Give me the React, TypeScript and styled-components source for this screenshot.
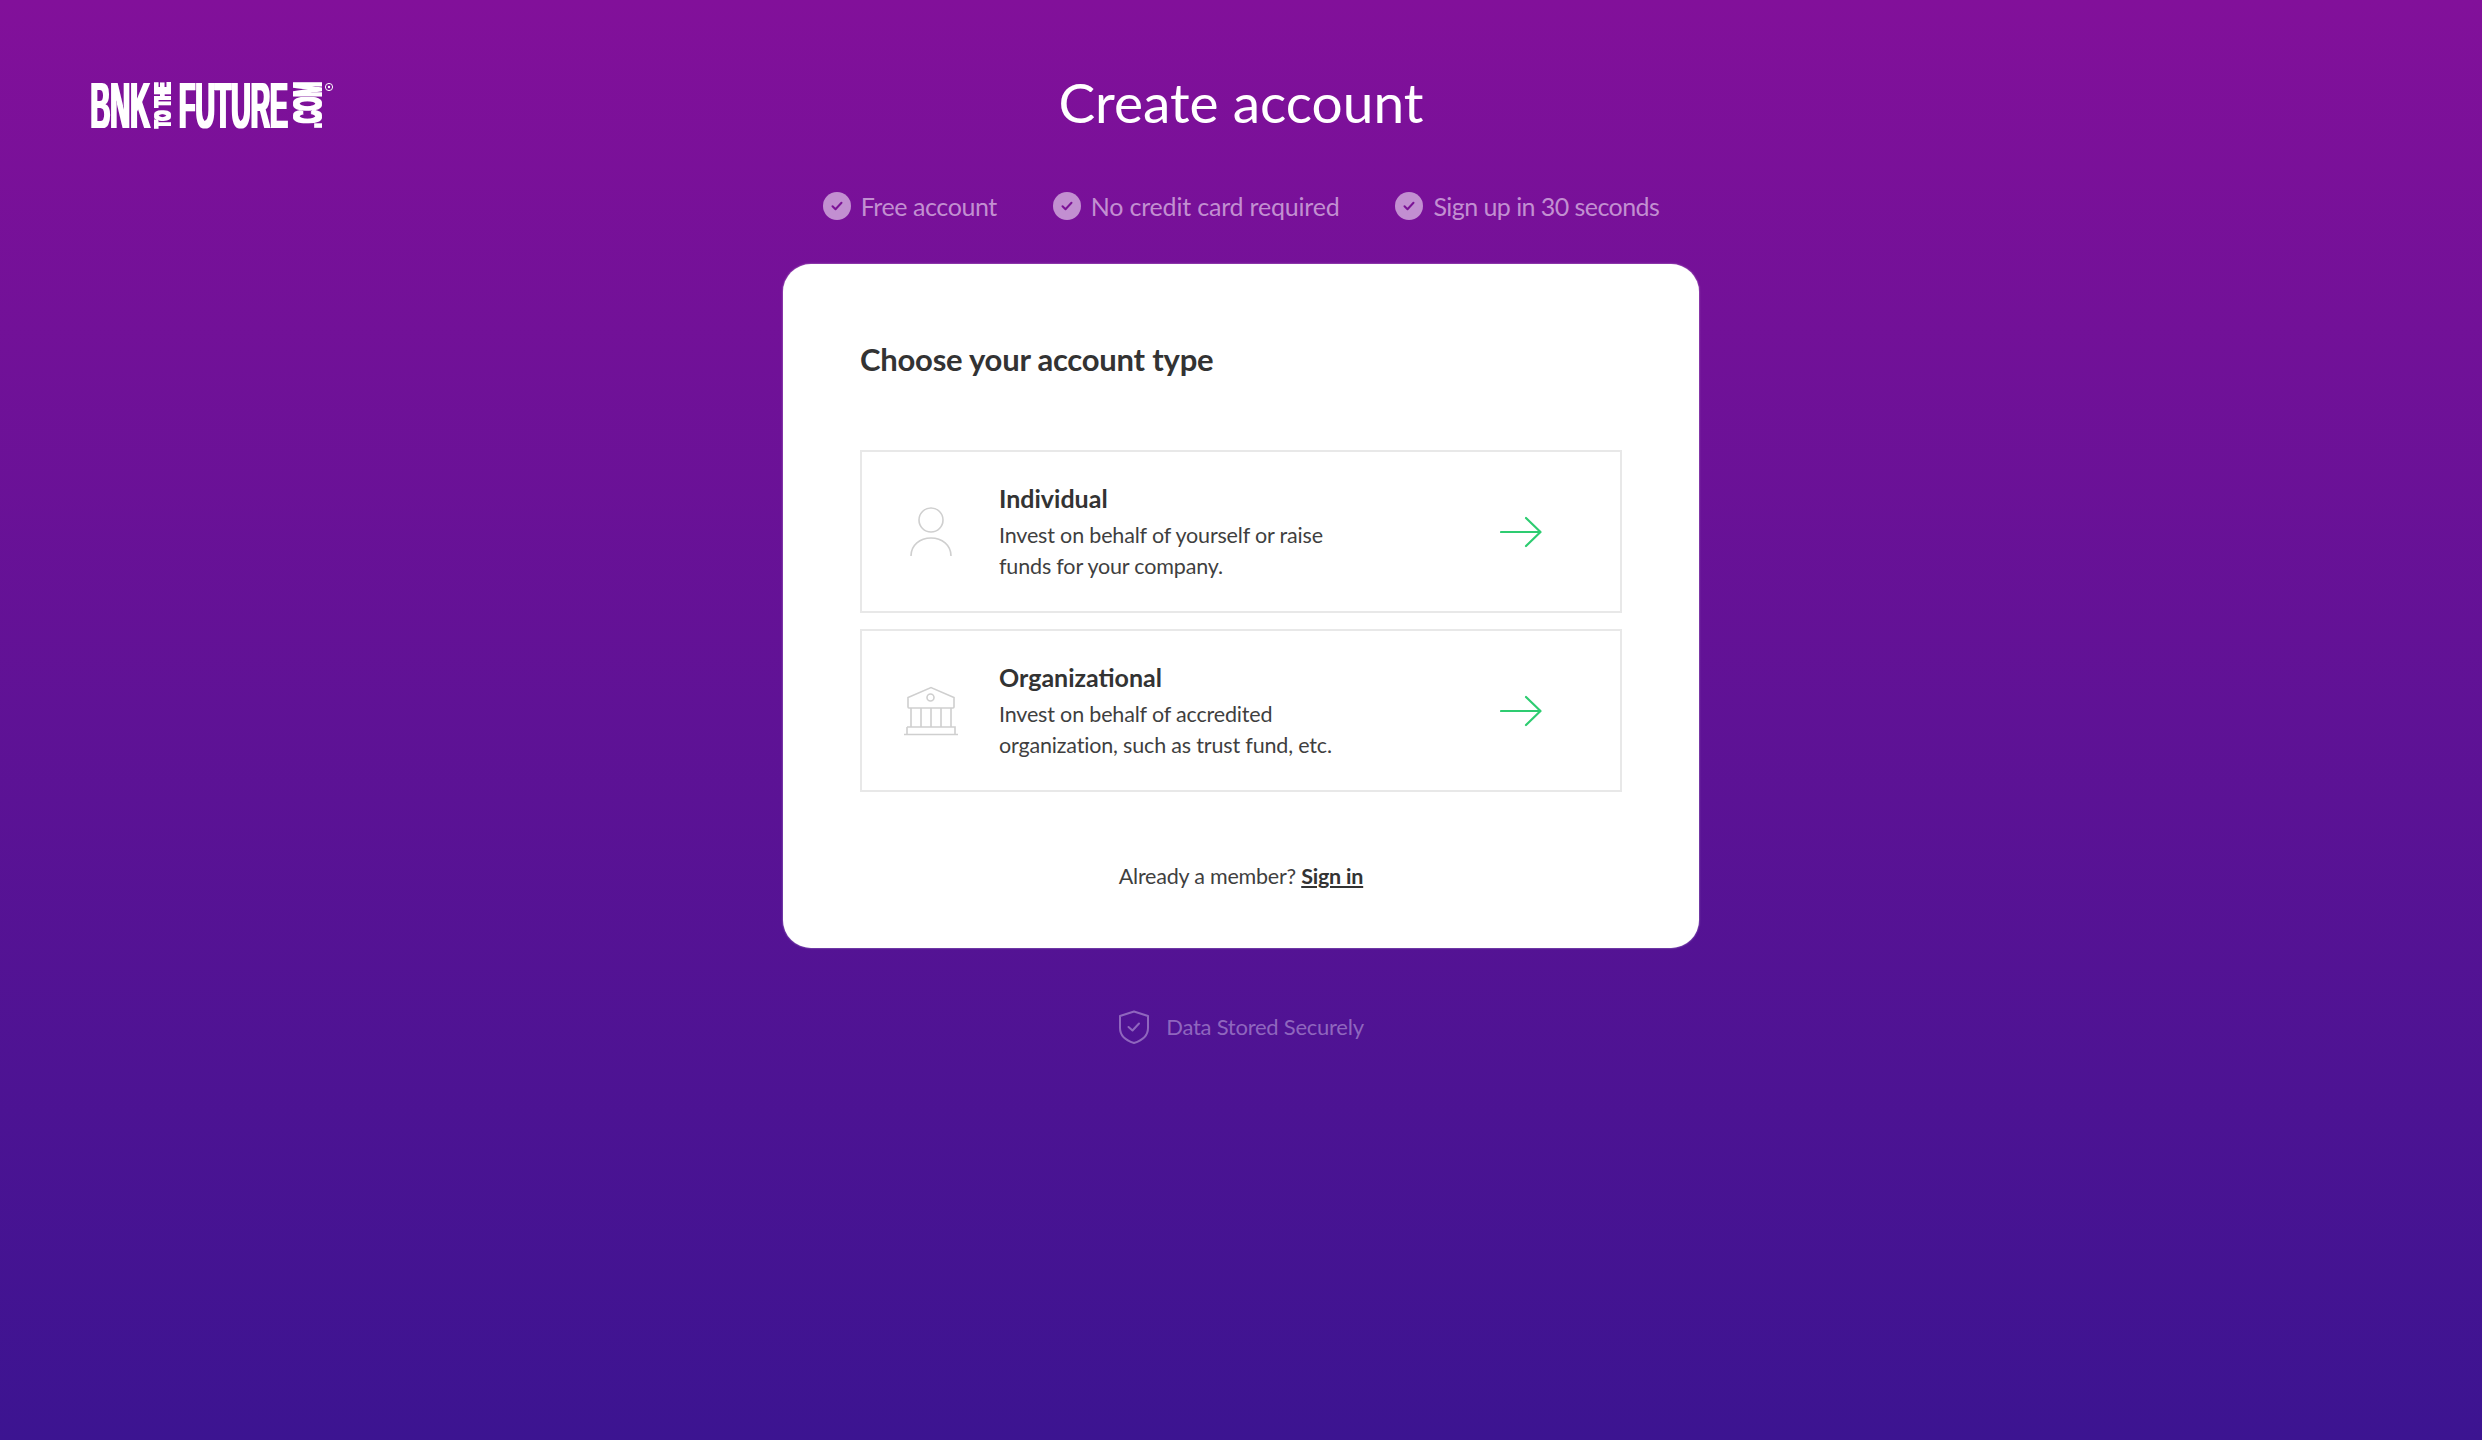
import React from "react";
import styled, { createGlobalStyle } from "styled-components";

const Global = createGlobalStyle`
  html, body { margin: 0; padding: 0; }
  body { font-family: Lato, "Open Sans", sans-serif; color: #333; }
  * { box-sizing: border-box; }
`;

const Page = styled.div`
  min-height: 1440px;
  display: flex;
  flex-direction: column;
  align-items: center;
  background: linear-gradient(180deg, #82109a 0%, #3c1491 100%);
`;

const Header = styled.header`
  width: 100%;
  display: grid;
  grid-template-columns: 1fr auto 1fr;
  align-items: start;
  padding-top: 65px;
  height: 142px;
`;

const LogoMark = styled.svg`
  display: block;
  width: 244px;
  height: 48px;
  margin: 17px 0 0 90px;
  overflow: visible;
`;

const Title = styled.h1`
  margin: 0;
  font-size: 55px;
  font-weight: 400;
  line-height: 74px;
  color: #fff;
`;

const Perks = styled.ul`
  list-style: none;
  margin: 43px 0 0;
  padding: 0;
  display: flex;
  gap: 56px;
  height: 42px;
  align-items: center;
`;

const Perk = styled.li<{ $tracking: number }>`
  display: flex;
  align-items: center;
  gap: 10px;
  font-size: 25px;
  letter-spacing: ${(p) => p.$tracking}px;
  color: #c28fd1;
`;

const Card = styled.main`
  width: 916px;
  height: 684px;
  margin-top: 37px;
  padding: 71px 77px 0;
  background: #fff;
  border-radius: 28px;
  box-shadow: 0 0 2px rgba(255, 255, 255, 0.6);
`;

const CardTitle = styled.h2`
  margin: 0 0 66px;
  font-size: 31px;
  letter-spacing: -0.23px;
  line-height: 49px;
  font-weight: 700;
  color: #333;
`;

const Rows = styled.div`
  display: flex;
  flex-direction: column;
  gap: 16px;
`;

const Row = styled.a`
  display: flex;
  align-items: center;
  height: 163px;
  padding: 0 78px 0 41px;
  border: 2px solid #e8e8e8;
  color: inherit;
  text-decoration: none;
`;

const IconSlot = styled.div`
  flex: none;
  width: 56px;
  display: flex;
  justify-content: center;
`;

const RowText = styled.div`
  flex: 1;
  margin-left: 40px;
`;

const RowTitle = styled.div`
  font-size: 25px;
  font-weight: 700;
  line-height: 38px;
  margin-top: -3px;
  margin-bottom: 3px;
  color: #333;
`;

const RowDesc = styled.div`
  max-width: 350px;
  font-size: 21.5px;
  letter-spacing: -0.17px;
  line-height: 31px;
  color: #3f3f3f;
`;

const Member = styled.p`
  margin: 68px 0 0;
  text-align: center;
  font-size: 21.5px;
  letter-spacing: -0.22px;
  line-height: 32px;
  color: #3f3f3f;
`;

const SignIn = styled.a`
  font-weight: 700;
  color: #333;
  text-decoration: underline;
`;

const Secure = styled.footer`
  margin-top: 61px;
  display: flex;
  align-items: center;
  gap: 16px;
  font-size: 22px;
  letter-spacing: -0.25px;
  line-height: 36px;
  color: #8f66be;
`;

const Logo = () => (
  <LogoMark viewBox="0 0 244 48" role="img" aria-label="BNK to the future .com">
    <defs>
      <filter id="thicken" x="-5%" y="-5%" width="110%" height="110%">
        <feMorphology operator="dilate" radius="1.1 0" />
      </filter>
      <filter id="thicken-side" x="-5%" y="-5%" width="110%" height="110%">
        <feMorphology operator="dilate" radius="0.5 0.7" />
      </filter>
    </defs>
    <g fill="#fff" fontFamily="'Liberation Sans', sans-serif" fontWeight="700">
      <g filter="url(#thicken)">
        <text transform="translate(0.5 46) scale(0.43 1)" fontSize="64">BNK</text>
        <text transform="translate(89 46) scale(0.42 1)" fontSize="64">FUTURE</text>
      </g>
      <g filter="url(#thicken-side)">
        <text transform="translate(80 46) rotate(-90) scale(0.57 1)" fontSize="22">TO THE</text>
        <text transform="translate(231 46) rotate(-90) scale(0.452 1)" fontSize="39">.COM</text>
      </g>
    </g>
    <circle cx="239" cy="5" r="3.6" fill="none" stroke="#fff" strokeWidth="1" />
    <circle cx="239" cy="5" r="1.2" fill="#fff" />
  </LogoMark>
);

const CheckBadge = () => (
  <svg width="28" height="28" viewBox="0 0 28 28" aria-hidden="true">
    <circle cx="14" cy="14" r="14" fill="#c28fd1" />
    <path d="M9.5 14.2l3 3 6-6.4" fill="none" stroke="#7b1396" strokeWidth="2" strokeLinecap="round" strokeLinejoin="round" />
  </svg>
);

const Arrow = () => (
  <svg width="42" height="32" viewBox="0 0 42 32" fill="none" stroke="#2ecc71" strokeWidth="2.2" strokeLinecap="round" strokeLinejoin="round" aria-hidden="true">
    <path d="M1 16h39M26 2l14.500 14L26 30" />
  </svg>
);

const PersonIcon = () => (
  <svg width="42" height="50" viewBox="0 0 42 50" fill="none" stroke="#cfcfcf" strokeWidth="1.6" aria-hidden="true">
    <circle cx="21" cy="13" r="12" />
    <path d="M1 49c0-11 9-18 20-18s20 7 20 18" />
  </svg>
);

const BankIcon = () => (
  <svg width="54" height="50" viewBox="0 0 54 50" fill="none" stroke="#cfcfcf" strokeWidth="1.6" aria-hidden="true">
    <path d="M4 21v-9.500L27 1.500 50 11.500V21a1 1 0 0 1-1 1H5a1 1 0 0 1-1-1z" />
    <circle cx="26.500" cy="11.500" r="3.500" />
    <path d="M7 22v19M17 22v19M27 22v19M37 22v19M47 22v19M3 41h48v7" />
    <path d="M3 41v7M0 48.500h54" />
  </svg>
);

const ShieldIcon = () => (
  <svg width="32" height="34" viewBox="0 0 32 34" fill="none" stroke="#8f66be" strokeWidth="2" strokeLinecap="round" strokeLinejoin="round" aria-hidden="true">
    <path d="M16 1.500L30 6v12c0 8-6 12.500-14 15C8 30.500 2 26 2 18V6z" />
    <path d="M10.500 17l4 3.500 6.500-7" />
  </svg>
);

const perks = [
  { label: "Free account", tracking: -0.42 },
  { label: "No credit card required", tracking: -0.2 },
  { label: "Sign up in 30 seconds", tracking: -0.56 },
];

const accounts = [
  {
    name: "Individual",
    desc: "Invest on behalf of yourself or raise funds for your company.",
    icon: <PersonIcon />,
  },
  {
    name: "Organizational",
    desc: "Invest on behalf of accredited organization, such as trust fund, etc.",
    icon: <BankIcon />,
  },
];

export default function App() {
  return (
    <>
      <Global />
      <Page>
        <Header>
          <Logo />
          <Title>Create account</Title>
          <span />
        </Header>
        <Perks>
          {perks.map((p) => (
            <Perk key={p.label} $tracking={p.tracking}>
              <CheckBadge />
              {p.label}
            </Perk>
          ))}
        </Perks>
        <Card>
          <CardTitle>Choose your account type</CardTitle>
          <Rows>
            {accounts.map((a) => (
              <Row key={a.name}>
                <IconSlot>{a.icon}</IconSlot>
                <RowText>
                  <RowTitle>{a.name}</RowTitle>
                  <RowDesc>{a.desc}</RowDesc>
                </RowText>
                <Arrow />
              </Row>
            ))}
          </Rows>
          <Member>
            Already a member? <SignIn>Sign in</SignIn>
          </Member>
        </Card>
        <Secure>
          <ShieldIcon />
          Data Stored Securely
        </Secure>
      </Page>
    </>
  );
}
